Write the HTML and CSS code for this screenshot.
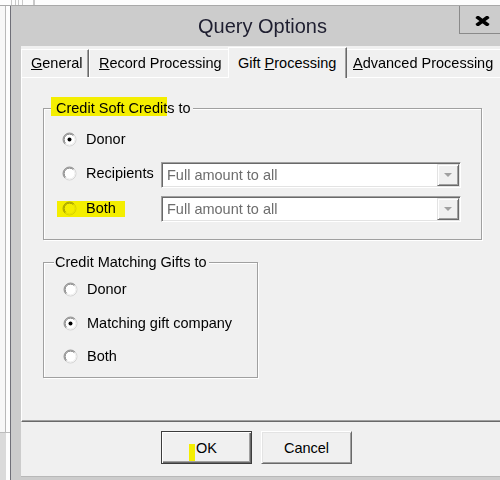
FILE: index.html
```html
<!DOCTYPE html>
<html>
<head>
<meta charset="utf-8">
<link rel="stylesheet" href="styles.css">
</head>
<body>
<svg class="defs" width="0" height="0">
  <symbol id="ring" viewBox="0 0 15 15">
    <circle cx="7.5" cy="7.5" r="6.5" fill="#fff"/>
    <path d="M2.9 12.1A6.5 6.5 0 0 1 12.1 2.9" fill="none" stroke="#9a9a9a"/>
    <path d="M12.1 2.9A6.5 6.5 0 0 1 2.9 12.1" fill="none" stroke="#d4d4d4"/>
    <path d="M3.61 11.39A5.5 5.5 0 0 1 11.39 3.61" fill="none" stroke="#6a6a6a"/>
    <path d="M11.39 3.61A5.5 5.5 0 0 1 3.61 11.39" fill="none" stroke="#ececec"/>
  </symbol>
  <symbol id="dot" viewBox="0 0 15 15">
    <circle cx="7.5" cy="7.5" r="2" fill="#000"/>
  </symbol>
</svg>
<div class="top"></div>
<div class="desk">
  <div class="side"><div class="side-a"></div><div class="side-b"></div></div>
  <div class="dialog">
    <div class="titlebar">
      <div class="title">Query Options</div>
      <div class="close"><svg width="15" height="10" viewBox="0 0 15 10"><path d="M1.5 0.5L13.5 9.5M13.5 0.5L1.5 9.5" stroke="#000" stroke-width="3.6" fill="none"/></svg></div>
    </div>
    <div class="client">
      <div class="tabs">
        <div class="tab t1"><u>G</u>eneral</div>
        <div class="tab t2"><u>R</u>ecord Processing</div>
        <div class="tab t3 sel">Gift <u>P</u>rocessing</div>
        <div class="tab t4"><u>A</u>dvanced Processing</div>
      </div>
      <div class="panel">
        <div class="group g1">
          <div class="legend leg1"><span class="hl">Credit Soft Credit</span>s to</div>
          <div class="row r1">
            <span class="opt"><svg class="radio" width="15" height="15"><use href="#ring"/><use href="#dot"/></svg><span>Donor</span></span>
          </div>
          <div class="row r2">
            <div class="cell"><span class="opt up"><svg class="radio" width="15" height="15"><use href="#ring"/></svg><span>Recipients</span></span></div>
            <div class="combo"><span class="ctext">Full amount to all</span><span class="dd"><span class="tri"></span></span></div>
          </div>
          <div class="row r3">
            <div class="cell"><span class="opt hlb"><svg class="radio mult" width="15" height="15"><use href="#ring"/></svg><span>Both</span></span></div>
            <div class="combo"><span class="ctext">Full amount to all</span><span class="dd"><span class="tri"></span></span></div>
          </div>
        </div>
        <div class="group g2">
          <div class="legend leg2">Credit Matching Gifts to</div>
          <div class="row s1">
            <span class="opt"><svg class="radio" width="15" height="15"><use href="#ring"/></svg><span>Donor</span></span>
          </div>
          <div class="row s2">
            <span class="opt"><svg class="radio" width="15" height="15"><use href="#ring"/><use href="#dot"/></svg><span>Matching gift company</span></span>
          </div>
          <div class="row s3">
            <span class="opt"><svg class="radio" width="15" height="15"><use href="#ring"/></svg><span>Both</span></span>
          </div>
        </div>
      </div>
      <div class="buttons">
        <div class="btn def"><span class="okmark"></span>OK</div>
        <div class="btn">Cancel</div>
      </div>
    </div>
  </div>
</div>
</body>
</html>
```
FILE: styles.css
```css
body {
  margin: 0;
  width: 500px;
  height: 480px;
  overflow: hidden;
  background: #fdfdfd;
  font-family: "Liberation Sans", Arial, sans-serif;
  font-size: 14.5px;
  color: #000;
}

.defs {
  position: absolute;
  width: 0;
  height: 0;
  overflow: hidden;
}

.top {
  height: 5px;
  border-bottom: 1px solid #a9a9a9;
  background: linear-gradient(to right,
    #fdfdfd 0 11px, #c9c9c9 11px 12px, #fdfdfd 12px 15px, #c9c9c9 15px 16px,
    #fdfdfd 16px 18px, #c9c9c9 18px 19px, #fdfdfd 19px 22px, #c9c9c9 22px 23px,
    #fdfdfd 23px 33px, #c9c9c9 33px 35px, #fdfdfd 35px);
}

.desk {
  display: flex;
  height: 474px;
}

.side {
  width: 10px;
  flex: none;
  display: flex;
  flex-direction: column;
}

.side-a {
  height: 426px;
  background: linear-gradient(to right, #f7f7f7 0 5px, #b9b9b9 5px 6px, #fdfdfd 6px);
}

.side-b {
  flex: 1;
  border-top: 1px solid #bdbdbd;
  background: linear-gradient(to right, #dadada 0 6px, #fdfdfd 6px);
}

.dialog {
  flex: none;
  width: 504px;
  box-sizing: border-box;
  border-left: 1px solid #6f6f78;
  background: #cccccc;
}

.titlebar {
  height: 40px;
  display: grid;
  grid-template-columns: 1fr auto 1fr;
  align-items: start;
}

.title {
  grid-column: 2;
  font-size: 20px;
  line-height: 40px;
  color: #1e1e30;
  white-space: nowrap;
}

.close {
  grid-column: 3;
  justify-self: end;
  margin-right: 9px;
  width: 46px;
  height: 28px;
  box-sizing: border-box;
  border: 1px solid #8a8a8a;
  border-top: none;
  padding-top: 3px;
  display: flex;
  align-items: center;
  justify-content: center;
}

.client {
  margin: 0 10px;
  height: 431px;
  background: #f0f0f0;
  display: flex;
  flex-direction: column;
}

.tabs {
  display: flex;
  align-items: flex-start;
  height: 31px;
  padding-top: 3px;
  box-sizing: border-box;
  flex: none;
}

.tab {
  height: 28px;
  box-sizing: border-box;
  border-top: 1px solid #fff;
  border-left: 1px solid #fff;
  border-right: 1px solid #696969;
  box-shadow: inset -1px 0 #a0a0a0;
  padding-left: 9px;
  line-height: 27px;
  white-space: nowrap;
  flex: none;
  background: #f0f0f0;
}

.t1 { width: 68px; }
.t2 { width: 141px; }
.t3 { width: 119px; }
.t4 { padding-left: 7px; width: 170px; }

.tab.sel {
  position: relative;
  z-index: 1;
  margin: -2px -2px 0 -2px;
  height: 31px;
  padding-top: 2px;
}

.panel {
  flex: none;
  height: 345px;
  box-sizing: border-box;
  border-top: 1px solid #fff;
  border-left: 1px solid #fff;
  border-bottom: 1px solid #696969;
  box-shadow: inset 0 -1px #a0a0a0;
  padding: 30px 0 0 21px;
}

.group {
  box-sizing: border-box;
  border: 1px solid #a0a0a0;
  box-shadow: inset 1px 1px #fff, 1px 1px #fff;
}

.g1 {
  width: 439px;
  padding-bottom: 17px;
}

.g2 {
  width: 215px;
  margin-top: 22px;
  padding-bottom: 8px;
}

.legend {
  width: fit-content;
  height: 16px;
  line-height: 16px;
  margin-top: -9px;
  padding: 0 2px 0 1px;
  background: #f0f0f0;
  white-space: nowrap;
}

.leg1 { margin-left: 11px; }
.leg2 { margin-left: 10px; }

.hl {
  background: #f4ee00;
  padding: 3px 0 0 5px;
  margin-left: -5px;
}

.row {
  display: flex;
  align-items: center;
  height: 26px;
}

.g1 .row { padding-left: 18px; }
.g2 .row { padding-left: 19px; }

.r1 { margin-top: 10px; }
.r2 { margin-top: 10px; }
.r3 { margin-top: 8px; }
.s1 { margin-top: 6px; }
.s2 { margin-top: 8px; }
.s3 { margin-top: 7px; }

.opt {
  display: flex;
  align-items: center;
  gap: 9px;
  white-space: nowrap;
}

.radio {
  display: block;
  flex: none;
}

.cell {
  width: 99px;
  flex: none;
  display: flex;
  align-items: center;
}

.up { margin-bottom: 4px; }

.hlb {
  background: #f4ee00;
  height: 16px;
  margin-left: -5px;
  padding: 0 9px 0 5px;
  align-items: flex-start;
  line-height: 14px;
}

.mult {
  mix-blend-mode: multiply;
  opacity: 0.7;
}

.combo {
  width: 300px;
  height: 26px;
  box-sizing: border-box;
  border: 1px solid;
  border-color: #a0a0a0 #fff #fff #a0a0a0;
  box-shadow: inset 1px 1px #696969, inset -1px -1px #e3e3e3;
  background: #fff;
  display: flex;
  align-items: center;
  padding: 1px 1px 1px 5px;
  color: #6d6d6d;
  white-space: nowrap;
}

.ctext { flex: 1; }

.dd {
  width: 22px;
  height: 22px;
  box-sizing: border-box;
  background: #f0f0f0;
  border: 1px solid;
  border-color: #e3e3e3 #696969 #696969 #e3e3e3;
  box-shadow: inset 1px 1px #fff, inset -1px -1px #a0a0a0;
  display: flex;
  align-items: center;
  justify-content: center;
}

.tri {
  width: 0;
  height: 0;
  border-left: 4px solid transparent;
  border-right: 4px solid transparent;
  border-top: 4px solid #a0a0a0;
}

.buttons {
  flex: 1;
  display: flex;
  align-items: flex-start;
  gap: 9px;
  padding: 9px 0 0 140px;
  border-bottom: 1px solid #b8b8b8;
}

.btn {
  position: relative;
  width: 91px;
  height: 33px;
  box-sizing: border-box;
  background: #f0f0f0;
  border: 1px solid;
  border-color: #fff #696969 #696969 #fff;
  box-shadow: inset 1px 1px #e3e3e3, inset -1px -1px #a0a0a0;
  display: flex;
  align-items: center;
  justify-content: center;
}

.btn.def {
  border-color: #3c3c3c;
  box-shadow: inset 1px 1px #fff, inset -1px -1px #696969, inset -2px -2px #a0a0a0;
}

.okmark {
  position: absolute;
  left: 27px;
  top: 12px;
  width: 6px;
  height: 17px;
  background: #f4ee00;
}
```
